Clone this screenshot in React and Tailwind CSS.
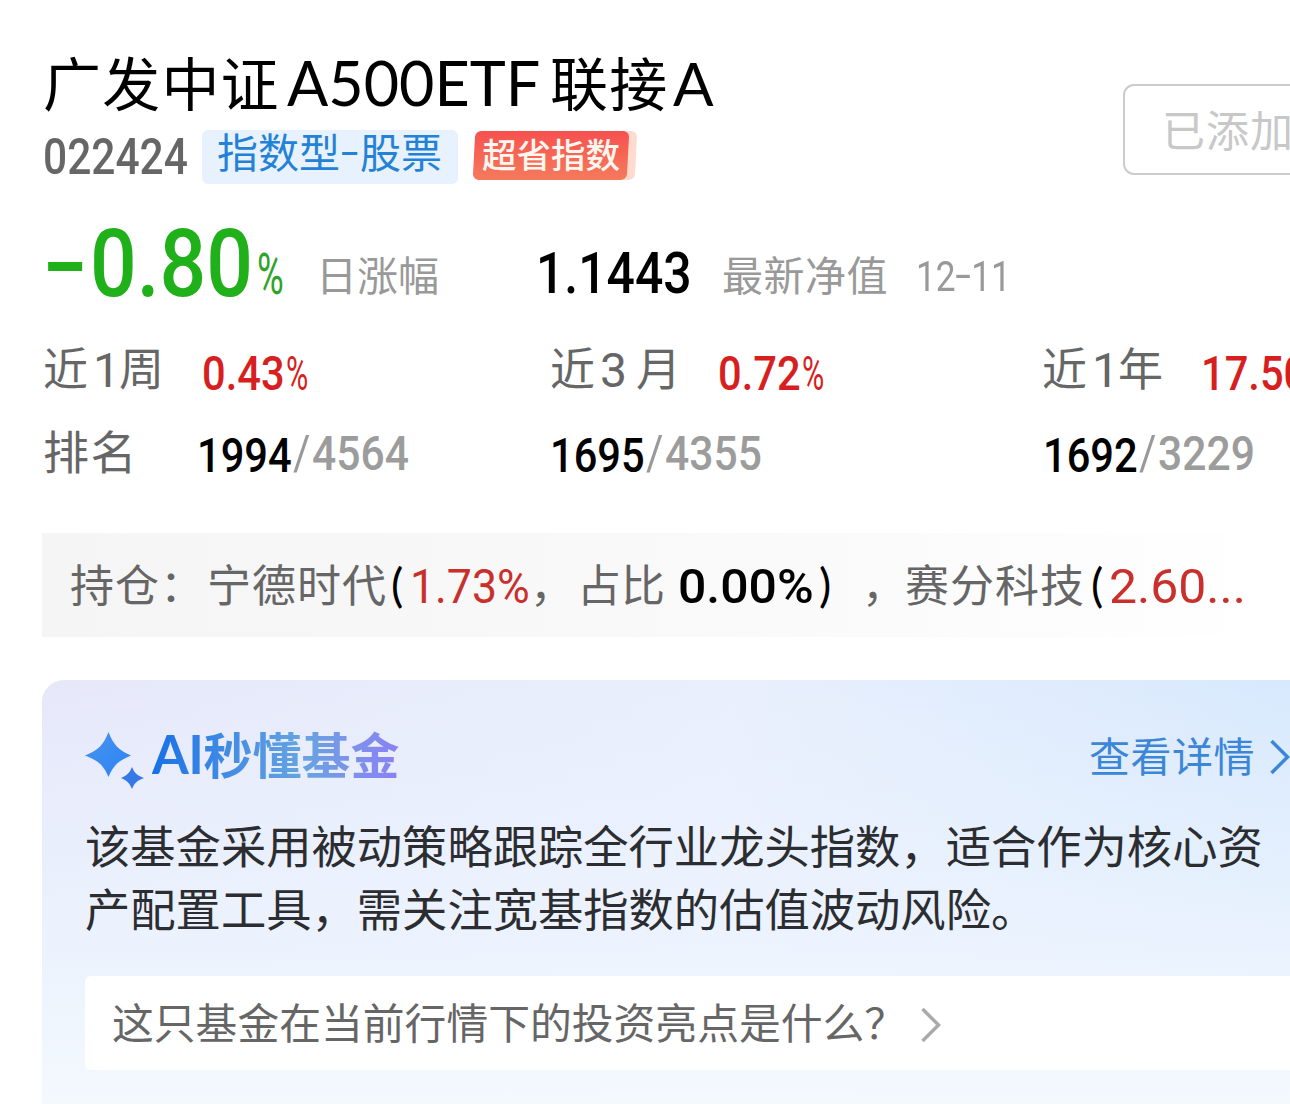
import React from 'react';
import clsx from 'clsx';

// Condensed figures: fixed slot, glyphs squeezed to fit it
const Num = ({ children, className, slot }) => (
  <span className={clsx('shrink-0 whitespace-nowrap', slot)}>
    <span className={clsx("inline-block origin-left font-['Roboto',sans-serif]", className)}>{children}</span>
  </span>
);

const Label = ({ children, className }) => (
  <span className={clsx('shrink-0 whitespace-nowrap', className)}>{children}</span>
);

const Latin = ({ children, className }) => (
  <span className={clsx("shrink-0 whitespace-nowrap font-['Lato',sans-serif]", className)}>{children}</span>
);

const Rank = ({ rank, total, className }) => (
  <div className={clsx('flex shrink-0 items-baseline', className)}>
    <Num slot="w-[96px]" className="translate-y-[3px] scale-x-[0.85] text-[49px] font-medium text-black">{rank}</Num>
    <Num slot="w-[19px]" className="scale-x-[0.86] text-[49px] text-[#999]">/</Num>
    <Num slot="w-[98px]" className="translate-y-[1px] scale-x-[0.87] text-[49px] font-medium text-[#9c9c9c]">{total}</Num>
  </div>
);

const Change = ({ value, className, slot = 'w-[84px]' }) => (
  <div className={clsx('flex shrink-0 items-baseline pl-px text-[#d71f22]', className)}>
    <Num slot={slot} className="translate-y-[4px] scale-x-[0.85] text-[49px] font-medium">{value}</Num>
    <Num slot="w-[24px]" className="translate-y-[4px] scale-x-[0.62] text-[49px]">%</Num>
  </div>
);

const Header = () => (
  <header className="flex h-[190px] pl-[43px]">
    <div className="w-[1080px] shrink-0">
      <div className="mt-[39px] flex h-[87px] items-baseline text-[58px] leading-[84px] text-black">
        <Label className="w-[244px] tracking-[1.2px]">广发中证</Label>
        <Latin className="w-[263px] text-[61px]">A500ETF</Latin>
        <Label className="w-[123px] tracking-[1.2px]">联接</Label>
        <Latin className="text-[60px]">A</Latin>
      </div>
      <div className="flex h-[58px] items-start">
        <Num slot="w-[159px] leading-[63px]" className="scale-x-[0.85] text-[50px] font-medium text-[#666]">022424</Num>
        <span className="mt-1 flex h-[54px] w-[256px] rounded-md bg-[#e7f2fe] pl-[15px] text-[41px] leading-[41px] text-[#2482d6]">
          <Label className="w-[124px]">指数型</Label>
          <Num slot="w-[19px]" className="-translate-y-[2px] scale-x-[1.55] text-[41px]">-</Num>
          <Label>股票</Label>
        </span>
        <span className="relative mt-[5px] ml-[15px] h-[49px] w-[163px]">
          <span className="absolute inset-y-0 right-0 w-10 -skew-x-3 rounded-md bg-[#fddccf]" />
          <span className="absolute inset-y-0 left-[1px] w-[154px] -skew-x-3 rounded-md bg-linear-to-b from-[#f6504f] to-[#f57a5c]" />
          <span className="relative block pl-[9px] text-[34.5px] leading-[44px] font-medium whitespace-nowrap text-[#fff6ef]">超省指数</span>
        </span>
      </div>
    </div>
    <button className="mt-[84px] h-[91px] w-[200px] shrink-0 rounded-[11px] border-2 border-[#ccc] pb-[5px] pl-[37px] text-left text-[43px] leading-[84px] tracking-[1px] whitespace-nowrap text-[#c8c8c8]">
      已添加
    </button>
  </header>
);

const Quote = () => (
  <div className="flex h-[130px] items-baseline pl-[43px] leading-[138px]">
    <Num slot="w-[47px]" className="translate-y-[4px] scale-x-[1.4] text-[94px] font-medium text-[#1fb01a]">-</Num>
    <Num slot="w-[167px]" className="translate-y-[5px] scale-x-[0.875] text-[94px] font-medium text-[#1fb01a]">0.80</Num>
    <Num slot="w-[59px]" className="translate-y-[3px] scale-x-[0.64] text-[57px] text-[#2da32b]">%</Num>
    <Label className="w-[220px] text-[41px] text-[#999]">日涨幅</Label>
    <Num slot="w-[186px]" className="translate-y-[2px] scale-x-[0.86] text-[58px] font-medium text-black">1.1443</Num>
    <Label className="w-[194px] text-[41px] tracking-[0.5px] text-[#999]">最新净值</Label>
    <Num className="scale-x-[0.82] text-[43px] text-[#999]">
      12<span className="inline-block w-[19px] origin-left -translate-y-[2px] scale-x-[1.6]">-</span>11
    </Num>
  </div>
);

const Period = ({ prefix, n, unit, slot, className }) => (
  <div className={clsx('flex shrink-0 items-baseline text-[45px] text-[#666]', className)}>
    <Label className="w-[50px]">{prefix}</Label>
    <Num slot={slot} className="translate-y-[1px] text-[48px]">{n}</Num>
    <Label>{unit}</Label>
  </div>
);

const Performance = () => (
  <div className="h-[213px] pl-[43px]">
    <div className="flex h-[82px] items-baseline leading-[94px]">
      <Period prefix="近" n="1" unit="周" slot="w-[26px]" className="w-[158px]" />
      <Change value="0.43" className="w-[349px]" />
      <Period prefix="近" n="3" unit="月" slot="w-[36px]" className="w-[167px]" />
      <Change value="0.72" className="w-[325px]" />
      <Period prefix="近" n="1" unit="年" slot="w-[26px]" className="w-[158px]" />
      <Change value="17.50" slot="w-[110px]" />
    </div>
    <div className="flex h-[83px] items-baseline leading-[94px]">
      <Label className="w-[154px] text-[46px] tracking-[1.500px] text-[#666]">排名</Label>
      <Rank rank="1994" total="4564" className="w-[353px]" />
      <Rank rank="1695" total="4355" className="w-[493px]" />
      <Rank rank="1692" total="3229" />
    </div>
  </div>
);

const Holdings = () => (
  <div className="ml-[42px] flex h-[104px] items-baseline bg-linear-to-r from-[#f5f5f5] via-[#fafafa] via-60% to-white pl-[28px] text-[44px] leading-[101px] text-[#666]">
    <Label className="w-[137px] tracking-[1px]">持仓：</Label>
    <Label className="w-[184px] tracking-[1px]">宁德时代</Label>
    <Latin className="w-[19px] text-[46px] text-black">(</Latin>
    <Num slot="w-[120px]" className="translate-y-[1px] scale-x-[0.93] text-[48px] text-[#c9302c]">1.73%</Num>
    <Label className="w-[47px]">，</Label>
    <Label className="w-[101px]">占比</Label>
    <Num slot="w-[141px]" className="translate-y-[1px] scale-x-[1.04] text-[48px] font-medium text-black">0.00%</Num>
    <Latin className="w-[43px] text-[46px] text-black">)</Latin>
    <Label className="w-[43px]">，</Label>
    <Label className="w-[186px] tracking-[1px]">赛分科技</Label>
    <Latin className="w-[18px] text-[46px] text-black">(</Latin>
    <Num className="translate-y-[1px] scale-x-[1.04] text-[48px] text-[#c9302c]">2.60...</Num>
  </div>
);

const Sparkles = () => (
  <svg className="h-[58px] w-[60px] shrink-0" viewBox="0 0 60 58">
    <defs>
      <linearGradient id="spark" x1="0" y1="0" x2="1" y2="1">
        <stop offset="0" stopColor="#4a94e8" />
        <stop offset="1" stopColor="#2b83fb" />
      </linearGradient>
    </defs>
    <path fill="url(#spark)" d="M23.500 0C28.500 13 34 18.500 46 23.500C34 28.500 28.500 33 23.500 45C18.500 33 13 28.500 0 23.500C13 18.500 18.500 13 23.500 0Z" />
    <path fill="#3579e6" d="M47 35C49.500 41 52 43.500 59 46C52 48.500 49.500 51 47 57C44.500 51 42 48.500 36 46C42 43.500 44.500 41 47 35Z" />
  </svg>
);

const Chevron = ({ className }) => (
  <svg className={className} viewBox="0 0 20 34" fill="none" stroke="currentColor" strokeWidth="3.500">
    <path d="M1.500 1L17.500 17L1.500 33" />
  </svg>
);

const AiCard = () => (
  <section className="mt-[43px] ml-[42px] h-[424px] rounded-tl-[22px] bg-linear-to-r from-[#e6e8fa] via-[#e9effd] via-55% to-[#d7e9fd]">
    <div className="h-full rounded-tl-[22px] bg-linear-to-b from-transparent via-[#edf4fe]/80 via-60% to-[#f4f9fe] pl-[43px]">
      <div className="flex h-[133px] pt-[52px]">
        <Sparkles />
        <h2 className="-mt-[4px] ml-[7px] flex w-[937px] shrink-0 items-baseline leading-[50px] font-bold whitespace-nowrap">
          <span className="bg-linear-to-r from-[#1670e6] via-[#65a4e0] via-60% to-[#8b80f5] bg-clip-text text-[49px] text-transparent">
            <span className="font-['Lato',sans-serif] text-[53px] tracking-[-0.500px]">AI</span>秒懂基金
          </span>
        </h2>
        <div className="-mt-[3px] flex shrink-0 text-[41px] leading-[50px] text-[#3c86d8]">
          <Label className="w-[181px] tracking-[0.5px]">查看详情</Label>
          <Chevron className="mt-[11px] h-[34px] w-5" />
        </div>
      </div>
      <p className="h-[163px] text-[45.3px] leading-[63px] whitespace-nowrap text-[#2b2d31]">
        该基金采用被动策略跟踪全行业龙头指数，适合作为核心资
        <br />
        产配置工具，需关注宽基指数的估值波动风险。
      </p>
      <div className="flex h-[94px] rounded-l-md bg-white pl-[27px] text-[41.8px] leading-[90px] text-[#666]">
        <Label className="w-[809px]">这只基金在当前行情下的投资亮点是什么？</Label>
        <Chevron className="mt-8 h-[34px] w-5 text-[#aaa]" />
      </div>
    </div>
  </section>
);

const App = () => (
  <main className="h-[1104px] w-[1290px] overflow-hidden bg-white font-['Noto_Sans_CJK_SC',sans-serif]">
    <Header />
    <Quote />
    <Performance />
    <Holdings />
    <AiCard />
  </main>
);

export default App;
